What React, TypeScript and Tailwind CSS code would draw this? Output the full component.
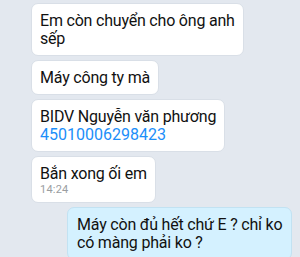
type Message = {
  id: number;
  lines: { text: string; link?: boolean }[];
  time?: string;
  mine?: boolean;
};

const messages: Message[] = [
  { id: 1, lines: [{ text: 'Em còn chuyển cho ông anh sếp' }] },
  { id: 2, lines: [{ text: 'Máy công ty mà' }] },
  {
    id: 3,
    lines: [{ text: 'BIDV Nguyễn văn phương' }, { text: '45010006298423', link: true }],
  },
  { id: 4, lines: [{ text: 'Bắn xong ối em' }], time: '14:24' },
  { id: 5, lines: [{ text: 'Máy còn đủ hết chứ E ? chỉ ko có màng phải ko ?' }], mine: true },
];

const Bubble = ({ msg }: { msg: Message }) => {
  const base =
    'rounded-[7px] border pt-2 pb-[7px] text-[16px] leading-[18px] tracking-[-0.2px] text-[#111]';
  const style = msg.mine
    ? 'ml-auto mr-2 max-w-[225px] bg-[#d4f1ff] border-[#c2e2f2] pl-[9px] pr-2'
    : 'ml-[31px] mr-auto max-w-[213px] bg-white border-[#d9dfe7] px-2';

  return (
    <div className={`${base} ${style} w-fit`}>
      {msg.lines.map((line, i) => (
        <div key={i} className={line.link ? 'text-[#1c8ef9] tracking-normal' : ''}>
          {line.text}
        </div>
      ))}
      {msg.time && (
        <div className="mt-[2px] text-[11px] leading-[10px] tracking-[0.2px] text-[#9a9da1]">{msg.time}</div>
      )}
    </div>
  );
};

export default function App() {
  return (
    <div
      className="h-[257px] w-[300px] overflow-hidden bg-[#e3e8ef] pt-[3px]"
      style={{ fontFamily: 'Roboto, "Liberation Sans", Arial, sans-serif' }}
    >
      <div className="flex flex-col gap-[4px]">
        {messages.map((m) => (
          <Bubble key={m.id} msg={m} />
        ))}
      </div>
    </div>
  );
}
